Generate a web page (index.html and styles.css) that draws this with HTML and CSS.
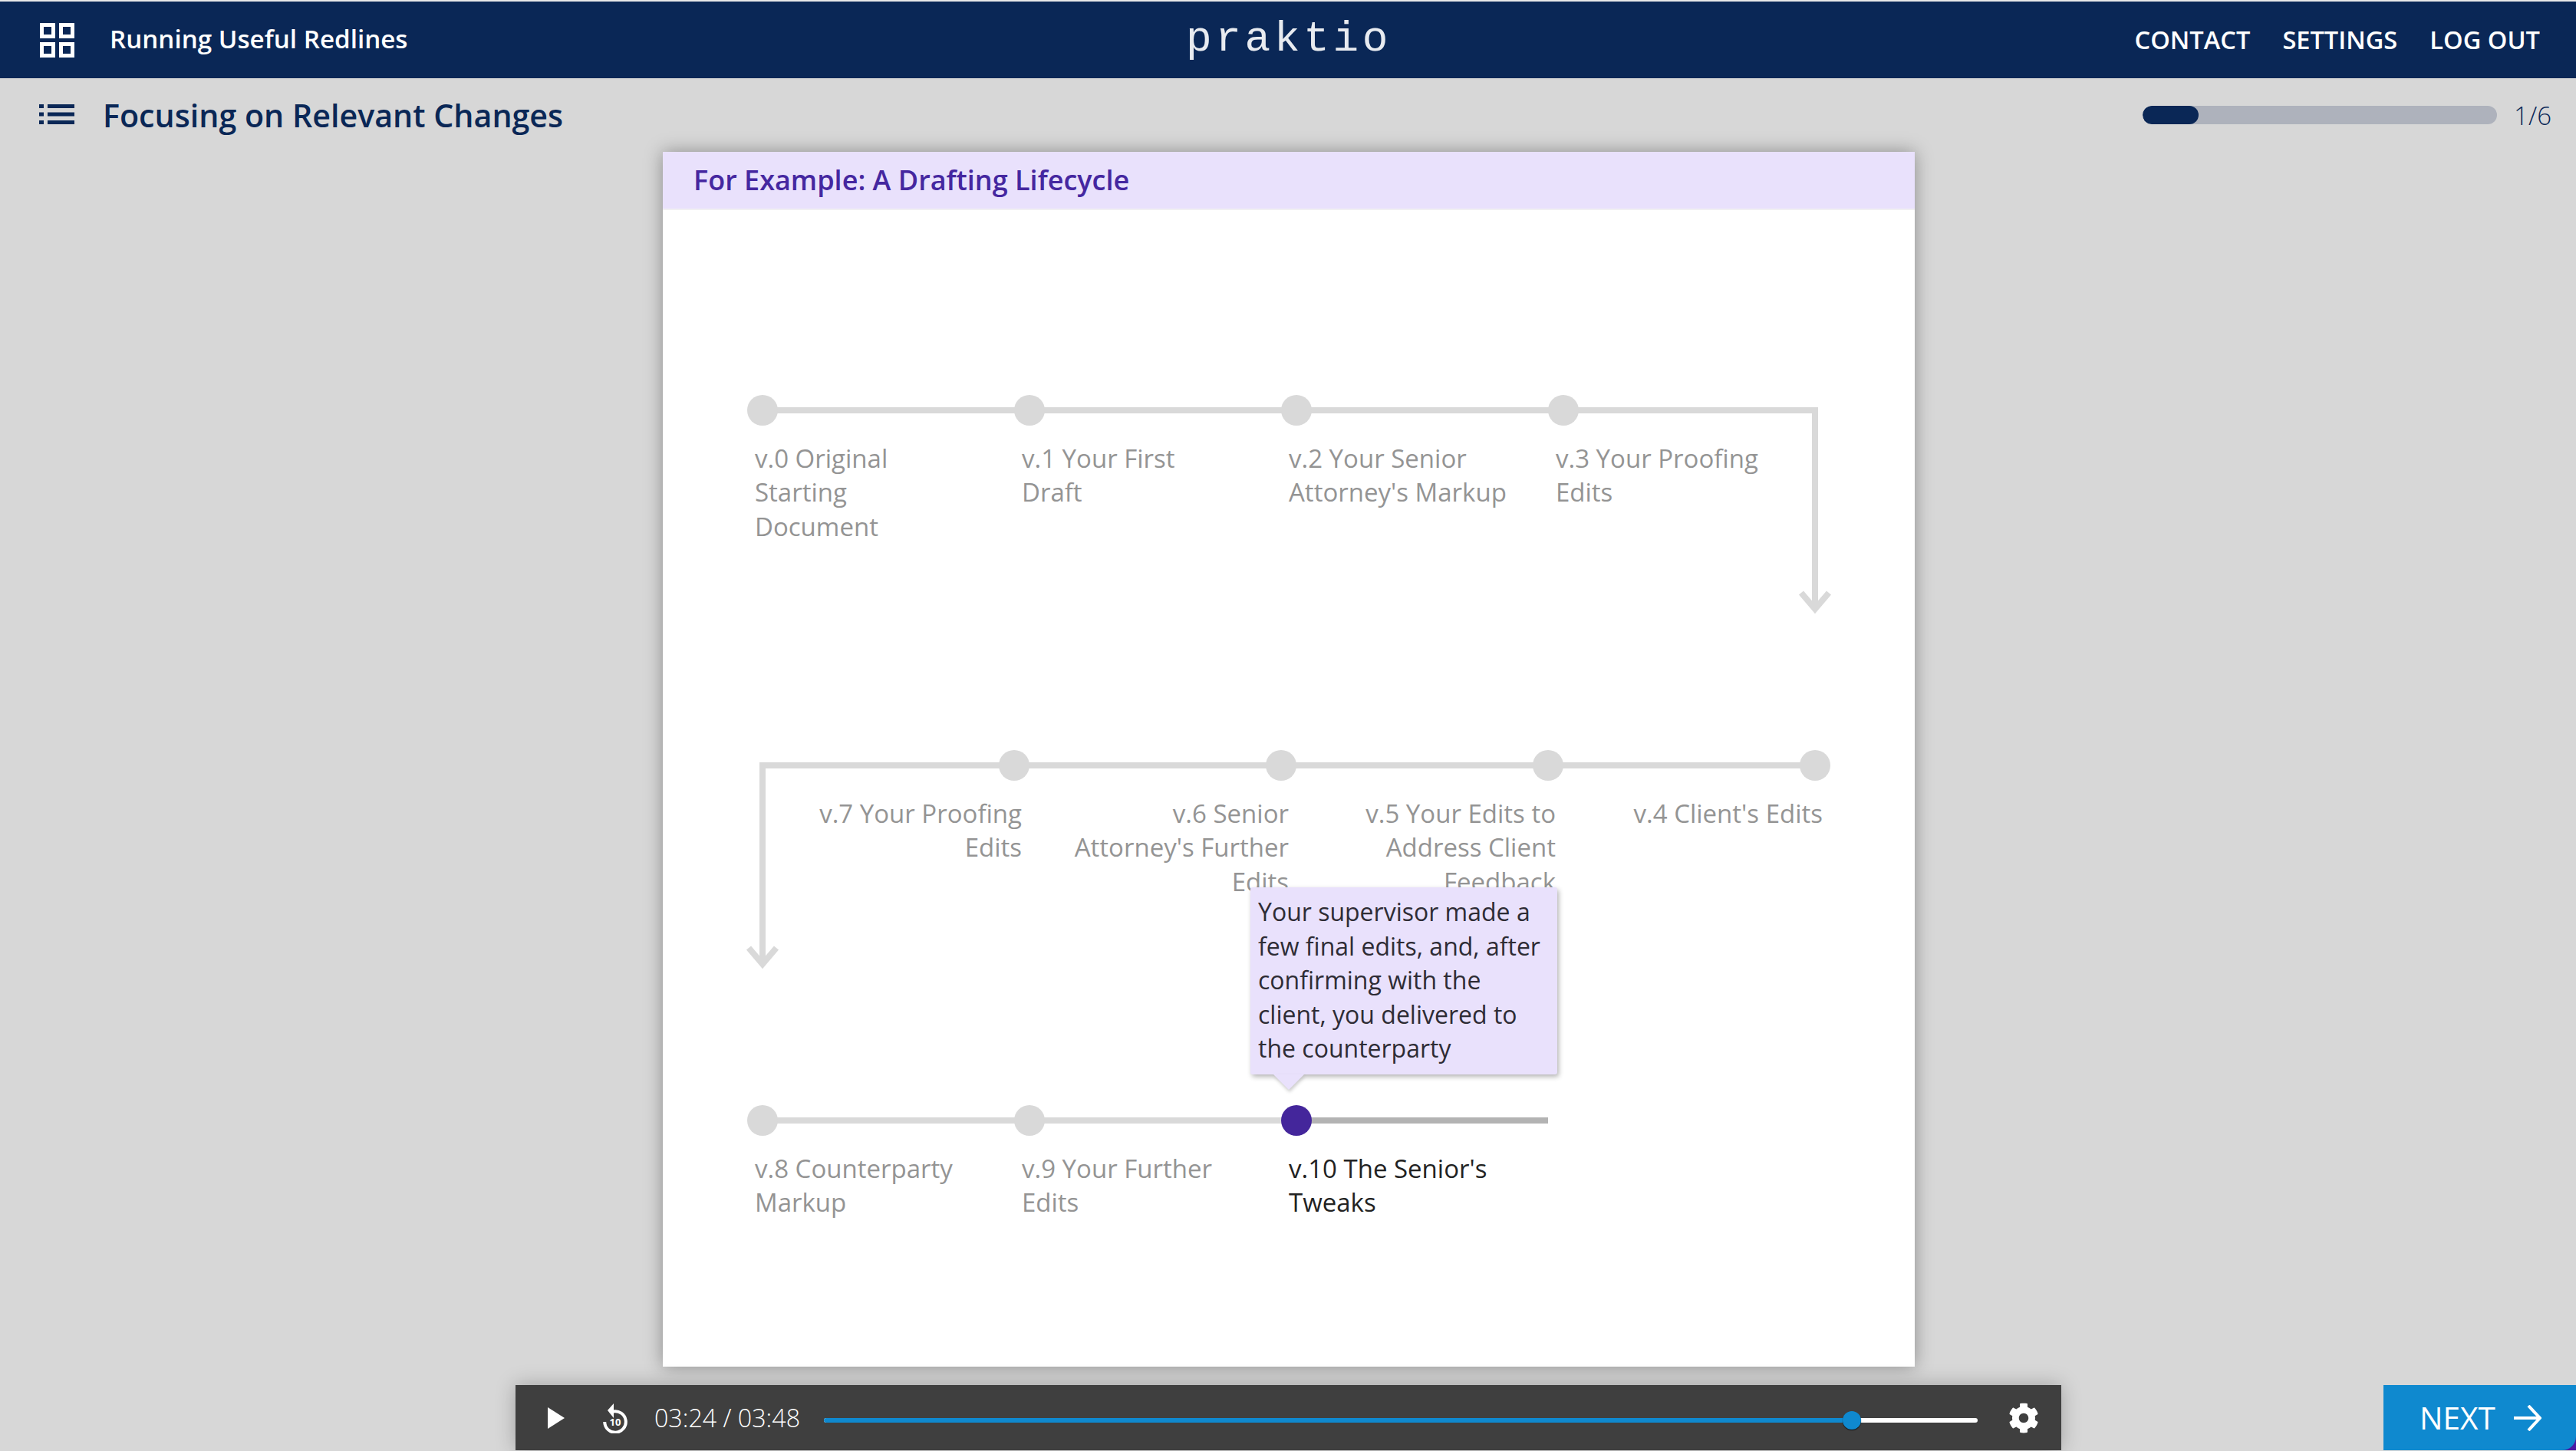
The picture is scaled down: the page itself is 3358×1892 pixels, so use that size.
FILE: index.html
```html
<!DOCTYPE html>
<html lang="en">
<head>
    <meta charset="utf-8" />
    <title>Running Useful Redlines</title>
    <link rel="stylesheet" href="styles.css">
</head>
<body>
    <header class="topbar">
        <div class="course">
            <svg class="grid-icon" viewBox="0 0 45 45">
                <path fill="#fff" fill-rule="evenodd" d="M0 0h20v20H0zM5 5v10h10V5zM25 0h20v20H25zM30 5v10h10V5zM0 25h20v20H0zM5 30v10h10V30zM25 25h20v20H25zM30 30v10h10V30z"/>
            </svg>
            <span class="course-title">Running Useful Redlines</span>
        </div>
        <div class="logo">praktio</div>
        <nav class="nav">
            <a>CONTACT</a>
            <a>SETTINGS</a>
            <a>LOG OUT</a>
        </nav>
    </header>

    <div class="subbar">
        <svg class="list-icon" viewBox="0 0 46 26">
            <path fill="#0a2756" d="M0 0h6v5H0zM11 0h35v5H11zM0 10.500h6v5H0zM11 10.500h35v5H11zM0 21h6v5H0zM11 21h35v5H11z"/>
        </svg>
        <h1 class="lesson-title">Focusing on Relevant Changes</h1>
        <div class="progress">
            <div class="progress-track"><div class="progress-fill"></div></div>
            <span class="progress-count">1/6</span>
        </div>
    </div>

    <main class="stage">
        <section class="card">
            <h2 class="card-head">For Example: A Drafting Lifecycle</h2>
            <div class="lifecycle">
                <svg class="connectors" viewBox="0 0 1632 1000" width="1632" height="1000">
                    <g fill="none" stroke="#d9d9d9" stroke-width="8">
                        <path d="M130 24H1502V284"/>
                        <path d="M1484 262L1502 283L1520 262"/>
                        <path d="M130 487V747"/>
                        <path d="M112 725L130 746L148 725"/>
                        <path d="M126 487H1502"/>
                        <path d="M130 950H826"/>
                    </g>
                    <path fill="none" stroke="#b3b3b3" stroke-width="8" d="M826 950H1154"/>
                </svg>

                <div class="row">
                    <div class="step"><span class="dot"></span><p class="label">v.0 Original Starting Document</p></div>
                    <div class="step"><span class="dot"></span><p class="label">v.1 Your First Draft</p></div>
                    <div class="step"><span class="dot"></span><p class="label">v.2 Your Senior Attorney's Markup</p></div>
                    <div class="step"><span class="dot"></span><p class="label">v.3 Your Proofing Edits</p></div>
                </div>
                <div class="row row-back">
                    <div class="step"><span class="dot"></span><p class="label">v.4 Client's Edits</p></div>
                    <div class="step"><span class="dot"></span><p class="label">v.5 Your Edits to Address Client Feedback</p></div>
                    <div class="step"><span class="dot"></span><p class="label">v.6 Senior Attorney's Further Edits</p></div>
                    <div class="step"><span class="dot"></span><p class="label">v.7 Your Proofing Edits</p></div>
                </div>
                <div class="row">
                    <div class="step"><span class="dot"></span><p class="label">v.8 Counterparty Markup</p></div>
                    <div class="step"><span class="dot"></span><p class="label">v.9 Your Further Edits</p></div>
                    <div class="step step-current">
                        <div class="tip">Your supervisor made a few final edits, and, after confirming with the client, you delivered to the counterparty</div>
                        <span class="dot"></span>
                        <p class="label">v.10 The Senior's Tweaks</p>
                    </div>
                </div>
            </div>
        </section>
    </main>

    <footer class="footer">
        <div class="player">
            <svg class="play-icon" viewBox="0 0 22 28"><path fill="#fff" d="M0 0L22 14L0 28z"/></svg>
            <svg class="replay-icon" viewBox="0 0 32 40">
                <path fill="#fff" d="M6 10L14 1V20z"/>
                <path fill="none" stroke="#fff" stroke-width="4" d="M13 11.500A13.800 13.800 0 1 1 2.200 25"/>
                <text class="replay-num" x="16" y="30" text-anchor="middle">10</text>
            </svg>
            <span class="time">03:24 / 03:48</span>
            <div class="seek">
                <div class="seek-done"></div>
                <span class="seek-knob"></span>
            </div>
            <svg class="gear-icon" viewBox="0 0 512 512">
                <path fill="#fff" d="M487.400 315.700l-42.600-24.600c4.300-23.200 4.300-47 0-70.200l42.600-24.600c4.900-2.800 7.100-8.600 5.500-14-11.100-35.600-30-67.800-54.700-94.600-3.800-4.100-10-5.100-14.800-2.300L380.800 110c-17.900-15.400-38.500-27.300-60.800-35.100V25.800c0-5.600-3.900-10.500-9.400-11.700-36.700-8.200-74.300-7.800-109.200 0-5.500 1.200-9.400 6.100-9.400 11.700V75c-22.200 7.900-42.800 19.800-60.800 35.100L88.700 85.500c-4.900-2.800-11-1.900-14.800 2.300-24.700 26.700-43.600 58.900-54.700 94.600-1.700 5.400.6 11.200 5.500 14L67.300 221c-4.300 23.200-4.300 47 0 70.200l-42.600 24.600c-4.900 2.800-7.100 8.600-5.500 14 11.100 35.600 30 67.800 54.700 94.600 3.800 4.100 10 5.100 14.800 2.300l42.600-24.600c17.900 15.400 38.500 27.300 60.800 35.100v49.200c0 5.600 3.900 10.500 9.400 11.700 36.700 8.200 74.300 7.800 109.200 0 5.500-1.200 9.400-6.100 9.400-11.700v-49.200c22.200-7.900 42.800-19.800 60.800-35.100l42.600 24.600c4.900 2.800 11 1.900 14.800-2.300 24.700-26.700 43.600-58.900 54.700-94.600 1.500-5.500-.7-11.300-5.600-14.100zM256 336c-44.100 0-80-35.900-80-80s35.900-80 80-80 80 35.900 80 80-35.900 80-80 80z"/>
            </svg>
        </div>
        <div class="next-corner">
            <a class="next">
                <span>NEXT</span>
                <svg class="next-arrow" viewBox="0 0 36 34"><path fill="none" stroke="#fff" stroke-width="4" d="M0 17H33M19 1L34 17L19 33"/></svg>
            </a>
        </div>
    </footer>
</body>
</html>
```

FILE: styles.css
```css
* {
    box-sizing: border-box;
}

html, body {
    margin: 0;
    height: 1892px;
    overflow: hidden;
}

body {
    display: flex;
    flex-direction: column;
    border-top: 2px solid #e9e9e9;
    background-color: #d7d7d7;
    font-family: "Open Sans", sans-serif;
    color: #0a2756;
}

.topbar {
    display: flex;
    align-items: center;
    position: relative;
    height: 100px;
    padding: 0 47px 0 52px;
    background-color: #0a2756;
    color: #fff;
}

.course {
    display: flex;
    align-items: center;
    gap: 46px;
}

.grid-icon {
    width: 45px;
    height: 45px;
}

.course-title {
    margin-top: -4px;
    font-size: 33.200px;
    font-weight: 600;
}

.logo {
    position: absolute;
    left: 1546px;
    top: 0;
    line-height: 98px;
    font-family: "Liberation Mono", monospace;
    font-size: 56px;
    letter-spacing: 4.700px;
    color: #e8ebf0;
}

.nav {
    display: flex;
    gap: 42px;
    margin: -2px 0 0 auto;
    font-size: 32.600px;
    font-weight: 600;
}

.subbar {
    display: flex;
    align-items: center;
    height: 96px;
    padding: 0 32px 0 51px;
}

.list-icon {
    width: 46px;
    height: 26px;
    margin-top: -2px;
}

.lesson-title {
    margin: -1px 0 0 37px;
    font-size: 41.200px;
    font-weight: 600;
}

.progress {
    display: flex;
    align-items: center;
    gap: 22px;
    margin-left: auto;
}

.progress-track {
    width: 462px;
    height: 24px;
    border-radius: 12px;
    background-color: #aeb2bc;
    overflow: hidden;
}

.progress-fill {
    width: 73px;
    height: 100%;
    border-radius: 12px;
    background-color: #0a2756;
}

.progress-count {
    font-size: 33px;
    font-weight: 300;
}

.stage {
    flex: 1;
    padding-left: 864px;
}

.card {
    width: 1632px;
    height: 1584px;
    background-color: #fff;
    box-shadow: 0 0 22px rgba(0, 0, 0, .35);
}

.card-head {
    height: 76px;
    margin: 0;
    padding-left: 40px;
    border-bottom: 2px solid #f1f0f2;
    background-color: #e9e1fc;
    font-size: 36px;
    font-weight: 600;
    line-height: 74px;
    color: #4527a0;
}

.lifecycle {
    position: relative;
    padding-top: 241px;
}

.connectors {
    position: absolute;
    left: 0;
    top: 237px;
}

.row {
    display: flex;
    position: relative;
    height: 463px;
    margin-left: 110px;
}

.row-back {
    flex-direction: row-reverse;
    justify-content: flex-start;
    width: 1392px;
    margin-left: 130px;
    text-align: right;
}

.step {
    position: relative;
    width: 348px;
}

.dot {
    display: block;
    width: 40px;
    height: 40px;
    border-radius: 50%;
    background-color: #d9d9d9;
}

.row-back .dot {
    margin-left: auto;
}

.label {
    width: 286px;
    margin: 21px 0 0 10px;
    font-size: 33px;
    line-height: 44.400px;
    color: #949494;
}

.row-back .label {
    margin: 21px 10px 0 auto;
}

.step-current .dot {
    background-color: #44269b;
}

.step-current .label {
    color: #222;
}

.tip {
    position: absolute;
    left: -40px;
    top: -284px;
    z-index: 2;
    width: 400px;
    height: 244px;
    padding: 10px 10px 0 10px;
    border-radius: 3px;
    background-color: #e9e1fc;
    box-shadow: 2px 3px 6px rgba(0, 0, 0, .3);
    font-size: 32px;
    line-height: 44.500px;
    color: #2e2c35;
}

.tip::after {
    content: "";
    position: absolute;
    left: 30px;
    top: 100%;
    border: 20px solid transparent;
    border-top-color: #e9e1fc;
    border-bottom: 0;
    filter: drop-shadow(1px 3px 2px rgba(0, 0, 0, .2));
}

.footer {
    display: flex;
    height: 85px;
    margin-bottom: 1px;
    padding-left: 672px;
}

.player {
    display: flex;
    align-items: center;
    width: 2015px;
    background-color: #3f3f3f;
    box-shadow: 0 0 24px rgba(0, 0, 0, .25);
    color: #fff;
}

.play-icon {
    width: 22px;
    height: 28px;
    margin-left: 42px;
}

.replay-icon {
    width: 32px;
    height: 40px;
    margin-left: 50px;
}

.replay-num {
    font-size: 13px;
    font-weight: 700;
    fill: #fff;
}

.time {
    margin-left: 35px;
    font-size: 32.200px;
    font-weight: 300;
}

.seek {
    position: relative;
    width: 1504px;
    height: 6px;
    margin: 7px 0 0 31px;
    border-radius: 3px;
    background-color: #fff;
}

.seek-done {
    width: 1340px;
    height: 100%;
    border-radius: 3px;
    background-color: #0f89cf;
}

.seek-knob {
    position: absolute;
    left: 1328px;
    top: -9px;
    width: 24px;
    height: 24px;
    border-radius: 50%;
    background-color: #0f89cf;
    box-shadow: 0 1px 1px #111;
}

.gear-icon {
    width: 40px;
    height: 40px;
    margin-left: 40px;
}

.next-corner {
    width: 251px;
    margin-left: auto;
    background: linear-gradient(to bottom, #0f89cf 70%, #4a1aa3 70%);
}

.next {
    display: flex;
    align-items: center;
    gap: 24px;
    height: 100%;
    padding-left: 47px;
    border-radius: 2px 0 18px 0;
    background-color: #0f89cf;
    font-size: 40.500px;
    color: #fff;
}

.next-arrow {
    width: 36px;
    height: 34px;
}
```
